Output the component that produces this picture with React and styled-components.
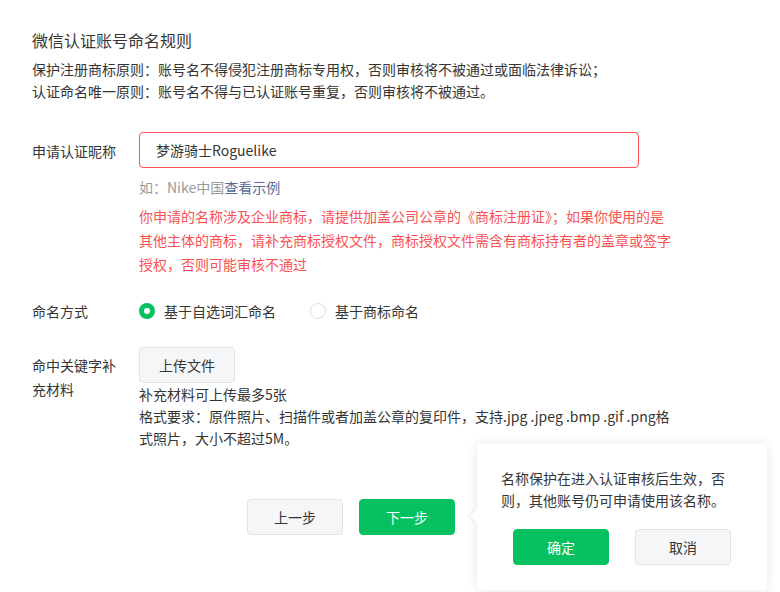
import React from 'react';
import styled, { createGlobalStyle } from 'styled-components';

const Global = createGlobalStyle`
  body {
    margin: 0;
    background: #fff;
    font-family: "Noto Sans CJK SC", "Noto Sans", sans-serif;
    color: #353535;
  }
`

function App() {
    return (
        <Page>
            <Global />
            <Title>微信认证账号命名规则</Title>
            <Rules>
                <p>保护注册商标原则：账号名不得侵犯注册商标专用权，否则审核将不被通过或面临法律诉讼；</p>
                <p>认证命名唯一原则：账号名不得与已认证账号重复，否则审核将不被通过。</p>
            </Rules>

            <Row $top={30}>
                <Label $pad={1} $lh={36}>申请认证昵称</Label>
                <Field>
                    <Input defaultValue="梦游骑士Roguelike" />
                    <Hint>如：Nike中国<a>查看示例</a></Hint>
                    <Error>
                        你申请的名称涉及企业商标，请提供加盖公司公章的《商标注册证》；如果你使用的是其他主体的商标，请补充商标授权文件，商标授权文件需含有商标持有者的盖章或签字授权，否则可能审核不通过
                    </Error>
                </Field>
            </Row>

            <Row $top={24}>
                <Label $pad={0} $lh={22}>命名方式</Label>
                <Radios>
                    <RadioItem>
                        <Radio $checked />
                        基于自选词汇命名
                    </RadioItem>
                    <RadioItem>
                        <Radio />
                        基于商标命名
                    </RadioItem>
                </Radios>
            </Row>

            <Row $top={25}>
                <Label $pad={6} $lh={24}>命中关键字补充材料</Label>
                <Field>
                    <GrayButton>上传文件</GrayButton>
                    <Note>
                        <p>补充材料可上传最多5张</p>
                        <p>格式要求：原件照片、扫描件或者加盖公章的复印件，支持.jpg .jpeg .bmp .gif .png格式照片，大小不超过5M。</p>
                    </Note>
                </Field>
            </Row>

            <Footer>
                <GrayButton>上一步</GrayButton>
                <GreenButton>下一步</GreenButton>
                <Popover>
                    <Arrow />
                    <PopText>名称保护在进入认证审核后生效，否则，其他账号仍可申请使用该名称。</PopText>
                    <PopActions>
                        <GreenButton>确定</GreenButton>
                        <GrayButton>取消</GrayButton>
                    </PopActions>
                </Popover>
            </Footer>
        </Page>
    )
}

const Page = styled.div`
 padding: 28px 32px 0;
 height: 592px;
 box-sizing: border-box;
 font-size: 14px;
`

const Title = styled.h1`
 margin: 0;
 font-size: 16px;
 font-weight: 400;
 line-height: 24px;
`

const Rules = styled.div`
 margin-top: 6px;
 p{
     margin: 0;
     line-height: 22px;
 }
`

const Row = styled.div`
 display: flex;
 margin-top: ${p => p.$top}px;
`

const Label = styled.div`
 width: 86px;
 margin-right: 21px;
 padding-top: ${p => p.$pad}px;
 line-height: ${p => p.$lh}px;
 flex-shrink: 0;
`

const Field = styled.div`
 display: flex;
 flex-direction: column;
 align-items: flex-start;
`

const Input = styled.input`
 width: 500px;
 height: 36px;
 box-sizing: border-box;
 border: 1px solid #fa5151;
 border-radius: 4px;
 padding: 0 16px;
 font-family: inherit;
 font-size: 14px;
 color: #353535;
 outline: none;
`

const Hint = styled.div`
 margin-top: 8px;
 line-height: 22px;
 color: #9a9a9a;
 a{
     color: #576b95;
 }
`

const Error = styled.div`
 margin-top: 6px;
 width: 536px;
 line-height: 24px;
 color: #fa5151;
`

const Radios = styled.div`
 display: flex;
 gap: 34px;
 line-height: 22px;
`

const RadioItem = styled.label`
 display: flex;
 align-items: center;
 gap: 9px;
`

const Radio = styled.span`
 width: 16px;
 height: 16px;
 box-sizing: border-box;
 border-radius: 50%;
 border: ${p => p.$checked ? 'none' : '1px solid #dcdcdc'};
 background: ${p => p.$checked ? '#07c160' : '#fff'};
 display: flex;
 align-items: center;
 justify-content: center;
 &::after{
     content: '';
     display: ${p => p.$checked ? 'block' : 'none'};
     width: 6px;
     height: 6px;
     border-radius: 50%;
     background: #fff;
 }
`

const ButtonBase = styled.button`
 width: 96px;
 height: 36px;
 border-radius: 4px;
 font-family: inherit;
 font-size: 14px;
 padding: 0;
 cursor: pointer;
`

const GrayButton = styled(ButtonBase)`
 background: #f5f6f7;
 border: 1px solid #e2e3e6;
 color: #353535;
`

const GreenButton = styled(ButtonBase)`
 background: #07c160;
 border: 1px solid #07c160;
 color: #fff;
`

const Note = styled.div`
 width: 540px;
 p{
     margin: 0;
     line-height: 22px;
 }
`

const Footer = styled.div`
 position: relative;
 display: flex;
 gap: 16px;
 margin-top: 50px;
 padding-left: 215px;
`

const Popover = styled.div`
 position: absolute;
 left: 445px;
 top: -55px;
 width: 290px;
 height: 146px;
 box-sizing: border-box;
 padding: 23px 24px 0;
 background: #fff;
 border-radius: 4px;
 box-shadow: 0 0 12px rgba(0, 0, 0, 0.1);
`

const Arrow = styled.div`
 position: absolute;
 left: -5px;
 top: 67px;
 width: 10px;
 height: 10px;
 background: #fff;
 transform: rotate(45deg);
 box-shadow: -2px 2px 4px rgba(0, 0, 0, 0.05);
`

const PopText = styled.div`
 position: relative;
 line-height: 22px;
`

const PopActions = styled.div`
 display: flex;
 justify-content: center;
 gap: 26px;
 margin-top: 18px;
`

export default App
